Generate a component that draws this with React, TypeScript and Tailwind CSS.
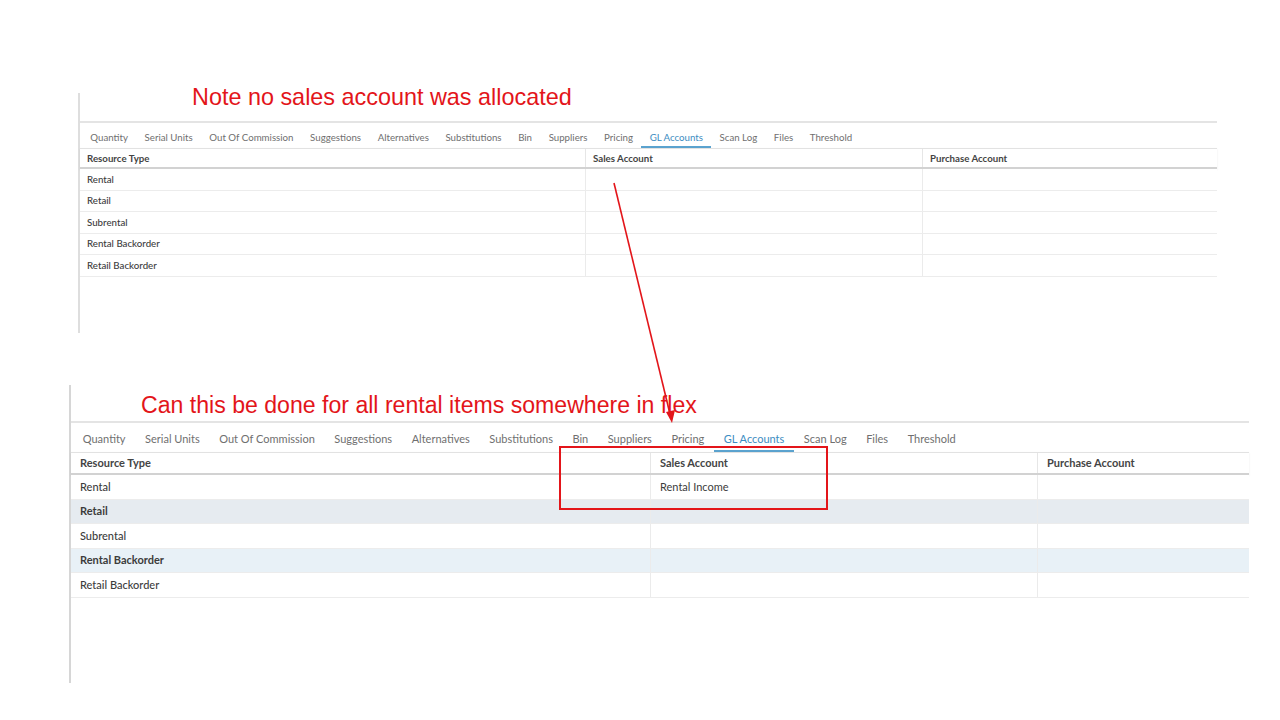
import React from 'react'

const TABS = [
  'Quantity',
  'Serial Units',
  'Out Of Commission',
  'Suggestions',
  'Alternatives',
  'Substitutions',
  'Bin',
  'Suppliers',
  'Pricing',
  'GL Accounts',
  'Scan Log',
  'Files',
  'Threshold',
]

const ROWS = ['Rental', 'Retail', 'Subrental', 'Rental Backorder', 'Retail Backorder']

interface FrameStyle {
  frame: string
  head: string
  caption: string
  captionText: string
  tabs: string
  tab: string
  grid: string
  headRow: string
  cell: string
  row: string
  striped: boolean
  sales: string
}

const small: FrameStyle = {
  frame: 'ml-[78px] mt-[93px] w-[1139px] h-[240px] border-l-2 border-[#dedede]',
  head: 'h-[28px]',
  caption: 'pl-[112px] -translate-y-[10px] text-[23.4px]',
  captionText: 'Note no sales account was allocated',
  tabs: 'h-[27px] pl-[2px] text-[9.7px] border-t-2 border-[#e4e4e4]',
  tab: 'px-[8.3px] pt-[5px]',
  grid: 'grid-cols-[505px_337px_1fr]',
  headRow: 'h-[21px] text-[9.7px]',
  cell: 'px-[7px]',
  row: 'h-[21.5px] text-[9.7px]',
  striped: false,
  sales: '',
}

const large: FrameStyle = {
  frame: 'ml-[69px] mt-[52px] w-[1180px] h-[298px] border-l-2 border-[#d6d6d6]',
  head: 'h-[36px]',
  caption: 'pl-[70px] translate-y-[6px] text-[23.1px]',
  captionText: 'Can this be done for all rental items somewhere in flex',
  tabs: 'h-[31px] pl-[2px] text-[11px] border-t-2 border-[#e4e4e4]',
  tab: 'px-[9.75px] pt-[5px]',
  grid: 'grid-cols-[579px_387px_1fr]',
  headRow: 'h-[23px] text-[11px]',
  cell: 'px-[9px]',
  row: 'h-[24.6px] text-[11px]',
  striped: true,
  sales: 'Rental Income',
}

function Frame({ s }: { s: FrameStyle }) {
  return (
    <div className={`${s.frame} flex flex-col`}>
      <div className={s.head}>
        <div
          className={`${s.caption} font-['Liberation_Sans',Arial,sans-serif] leading-[28px] text-[#e3151a] whitespace-nowrap`}
        >
          {s.captionText}
        </div>
      </div>

      {/* Tabs */}
      <div className={`${s.tabs} flex items-stretch text-[#6f6f6f]`}>
        {TABS.map((t) => (
          <div
            key={t}
            className={`${s.tab} flex items-center whitespace-nowrap border-b-2 ${
              t === 'GL Accounts' ? 'border-[#5ba3cf] text-[#3d8dc2]' : 'border-transparent'
            }`}
          >
            {t}
          </div>
        ))}
      </div>

      {/* Table */}
      <div className="text-[#3c3c3c]">
        <div
          className={`grid ${s.grid} ${s.headRow} font-bold border-t border-[#e2e2e2] border-b-2 border-b-[#d2d2d2] shadow-[0_1px_2px_rgba(0,0,0,0.08)] text-[#444]`}
        >
          <div className={`${s.cell} flex items-center`}>Resource Type</div>
          <div className={`${s.cell} flex items-center border-l border-[#e6e6e6]`}>Sales Account</div>
          <div className={`${s.cell} flex items-center border-l border-[#e6e6e6]`}>Purchase Account</div>
        </div>
        {ROWS.map((r, i) => {
          let bg = 'bg-white'
          if (s.striped && i === 1) bg = 'bg-[#e6ebf0]'
          if (s.striped && i === 3) bg = 'bg-[#e8f1f7]'
          return (
            <div
              key={r}
              className={`grid ${s.grid} ${s.row} ${bg} border-b border-[#ececec] ${
                s.striped && (i === 1 || i === 3) ? 'font-bold' : 'font-medium'
              }`}
            >
              <div className={`${s.cell} flex items-center`}>{r}</div>
              <div className={`${s.cell} flex items-center border-l border-[#ebebeb] font-normal`}>
                {i === 0 ? s.sales : ''}
              </div>
              <div className={`${s.cell} flex items-center border-l border-[#ebebeb]`} />
            </div>
          )
        })}
      </div>
    </div>
  )
}

export default function App() {
  return (
    <div className="relative w-[1280px] h-[720px] overflow-hidden bg-white font-['Lato','Noto_Sans',sans-serif]">
      <Frame s={small} />
      <Frame s={large} />

      {/* Annotation: highlight box */}
      <div className="absolute left-[559px] top-[446px] w-[269px] h-[64px] border-2 border-[#e3151a]" />

      {/* Annotation: arrow */}
      <svg className="absolute left-0 top-0" width="1280" height="720" viewBox="0 0 1280 720">
        <line x1="614" y1="183" x2="670" y2="414" stroke="#e3151a" strokeWidth="1.6" />
        <polygon points="672,423 666,412 675,410" fill="#e3151a" />
      </svg>
    </div>
  )
}
